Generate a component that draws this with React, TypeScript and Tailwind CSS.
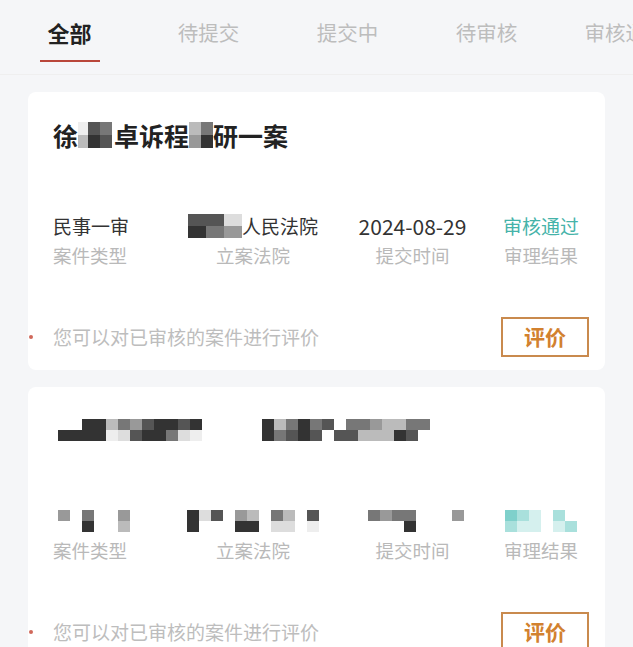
import React from 'react';

const TABS = ['全部', '待提交', '提交中', '待审核', '审核通过'];

const CELL: Record<string, string> = {
  '.': 'bg-transparent',
  a: 'bg-[#333333]',
  b: 'bg-[#555555]',
  c: 'bg-[#777777]',
  d: 'bg-[#999999]',
  e: 'bg-[#bbbbbb]',
  f: 'bg-[#dddddd]',
  g: 'bg-[#eeeeee]',
  t: 'bg-[#7fd0cb]',
  u: 'bg-[#a9e0dc]',
  v: 'bg-[#d5f0ee]',
};

// pixelated redaction blocks, one string per row
function Mosaic({ rows, cell = 'w-[12px] h-[11px]' }: { rows: string[]; cell?: string }) {
  return (
    <div className="flex flex-col">
      {rows.map((row, i) => (
        <div key={i} className="flex">
          {row.split('').map((c, j) => (
            <div key={j} className={`${cell} ${CELL[c]}`} />
          ))}
        </div>
      ))}
    </div>
  );
}

type Col = { value: React.ReactNode; label: string };

function InfoRow({ cols }: { cols: Col[] }) {
  const widths = ['w-[135px] items-start', 'w-[130px] items-center', 'ml-[41px] w-[107px] items-center', 'ml-[37px] w-[76px] items-center'];
  return (
    <div className="mt-[64px] flex pl-[25px]">
      {cols.map((c, i) => (
        <div key={i} className={`flex flex-none flex-col ${widths[i]}`}>
          <div className="flex h-[24px] items-center text-[19px] leading-[24px] text-[#333333] whitespace-nowrap">{c.value}</div>
          <div className="mt-[5px] text-[18.5px] leading-[24px] text-[#b9b9b9] whitespace-nowrap">{c.label}</div>
        </div>
      ))}
    </div>
  );
}

function Footer() {
  return (
    <div className="mt-[50px] flex items-center pr-[16px] pb-[13px]">
      <span className="ml-[1px] h-[4px] w-[4px] rounded-full bg-[#d0685a]" />
      <span className="ml-[20px] flex-1 text-[19px] leading-[24px] text-[#bdbdbd]">您可以对已审核的案件进行评价</span>
      <button className="flex h-[40px] w-[88px] items-center justify-center border-2 border-[#c98a4e] bg-white text-[21px] font-bold text-[#d2812f]">
        评价
      </button>
    </div>
  );
}

function Card({ title, cols }: { title: React.ReactNode; cols: Col[] }) {
  return (
    <div className="mx-[28px] rounded-[8px] bg-white">
      <div className="mt-[28px] flex h-[30px] items-center pl-[25px] text-[25px] font-bold leading-[30px] text-[#222222]">
        {title}
      </div>
      <InfoRow cols={cols} />
      <Footer />
    </div>
  );
}

export default function App() {
  const first: Col[] = [
    { value: '民事一审', label: '案件类型' },
    {
      value: (
        <>
          <Mosaic rows={['bbf', 'acd']} cell="w-[18px] h-[12px]" />
          <span>人民法院</span>
        </>
      ),
      label: '立案法院',
    },
    { value: <span className="text-[21px]">2024-08-29</span>, label: '提交时间' },
    { value: <span className="text-[#45b3a9]">审核通过</span>, label: '审理结果' },
  ];

  const second: Col[] = [
    { value: <div className="pl-[5px]"><Mosaic rows={['d.c..d', '..a..e']} /></div>, label: '案件类型' },
    { value: <Mosaic rows={['afb.de.ce.b', 'a...aa.ff.g']} />, label: '立案法院' },
    { value: <div className="pl-[6px]"><Mosaic rows={['cdcc...d', '...a....']} /></div>, label: '提交时间' },
    { value: <Mosaic rows={['tuv.u.', 'uvv.vu']} />, label: '审理结果' },
  ];

  return (
    <div
      className="min-h-[647px] w-full overflow-hidden bg-[#f5f6f8]"
      style={{ fontFamily: '"Noto Sans CJK SC", "Noto Sans", sans-serif' }}
    >
      <div className="flex overflow-hidden whitespace-nowrap border-b border-[#efefef] pb-[12px]">
        {TABS.map((t, i) => (
          <div key={t} className="flex w-[139px] flex-none flex-col items-center pt-[18px]">
            <span
              className={
                i === 0
                  ? 'text-[22px] font-bold leading-[28px] text-[#222222]'
                  : 'text-[20.5px] leading-[28px] text-[#bdbdbd]'
              }
            >
              {t}
            </span>
            <span className={`mt-[14px] h-[2px] w-[60px] ${i === 0 ? 'bg-[#b9473b]' : 'bg-transparent'}`} />
          </div>
        ))}
      </div>

      <div className="flex flex-col gap-[17px] pt-[17px]">
        <Card
          title={
            <>
              <span>徐</span>
              <Mosaic rows={['g', 'e']} cell="w-[10px] h-[13px]" />
              <Mosaic rows={['bc', 'ab']} cell="w-[12px] h-[13px]" />
              <span className="ml-[2px]">卓诉程</span>
              <Mosaic rows={['ec', 'da']} cell="w-[12px] h-[13px]" />
              <span>研一案</span>
            </>
          }
          cols={first}
        />
        <Card
          title={
            <div className="pl-[5px]">
              <Mosaic
                rows={['..aaecdbaaba.....aecacb.ccdeecc', 'aaaagfbaacfg.....acbab.bbeeeab']}
              />
            </div>
          }
          cols={second}
        />
      </div>
    </div>
  );
}
